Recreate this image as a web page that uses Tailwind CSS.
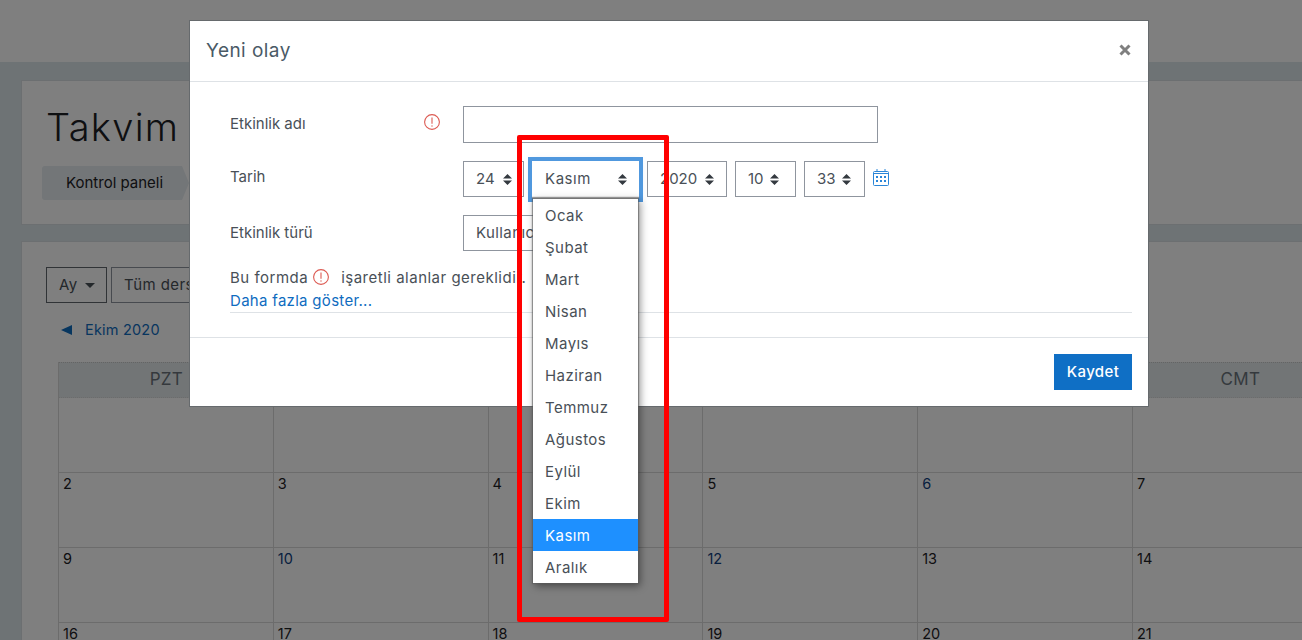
<!DOCTYPE html>
<html lang="tr">
<head>
  <meta charset="UTF-8">
  <meta name="viewport" content="width=device-width, initial-scale=1.0">
  <title>Takvim</title>
  <script src="https://cdn.jsdelivr.net/npm/@tailwindcss/browser@4"></script>
</head>
<body class="font-['Inter',sans-serif] text-[15px] text-[#1d2125]">
  <div class="relative w-[1302px] h-[640px] overflow-hidden bg-white">

    <!-- page behind the modal -->
    <div class="h-[62px] bg-white"></div>
    <div class="w-[1500px] h-[578px] bg-[#dde6eb] pt-[18px] pl-[21px]">
      <div class="h-[145px] bg-white border border-[#d9dee2] pl-[24px] pt-[18px]">
        <h1 class="text-[38px] font-light tracking-[1.3px] leading-[57px] text-[#1d2125]">Takvim</h1>
        <div class="mt-[10px] -ml-[4px] w-[147px] h-[34px] bg-[#e6ecf0] rounded-l-[3px] flex items-center pl-[24px] text-[15px] whitespace-nowrap [clip-path:polygon(0_0,140px_0,147px_50%,140px_100%,0_100%)]">Kontrol paneli</div>
      </div>
      <div class="mt-[16px] h-[420px] bg-white border border-[#d9dee2] pl-[24px] pt-[25px]">
        <div class="flex gap-[4px] text-[#495057]">
          <div class="w-[61px] h-[36px] border border-[#60676d] flex items-center gap-[7px] pl-[12px] tracking-[0.4px]">Ay
            <span class="w-0 h-0 border-x-[5px] border-x-transparent border-t-[5px] border-t-[#495057]"></span>
          </div>
          <div class="w-[200px] h-[36px] border border-[#8f959e] flex items-center pl-[12px] tracking-[0.4px]">Tüm dersler</div>
        </div>
        <div class="mt-[16px] ml-[15px] h-[22px] flex items-center gap-[13px] text-[#0f6cbf] text-[14.5px] tracking-[0.2px]">
          <span class="w-0 h-0 border-y-[5px] border-y-transparent border-r-[11px] border-r-[#0f6cbf]"></span>Ekim 2020
        </div>
        <div class="mt-[21px] ml-[12px] w-[1505px] grid grid-cols-[repeat(7,214.8px)] grid-rows-[36px_75px_75px_75px_75px] border-l border-[#d8d8d8] text-[14.5px]">
          <div class="bg-[#e4ebed] border-t border-dotted border-[#c8c8c8] border-b border-b-[#d8d8d8] text-center text-[#6a737b] text-[17px] leading-[32px] tracking-[0.3px]">PZT</div>
          <div class="bg-[#e4ebed] border-t border-dotted border-[#c8c8c8] border-b border-b-[#d8d8d8] text-center text-[#6a737b] text-[17px] leading-[32px] tracking-[0.3px]">SAL</div>
          <div class="bg-[#e4ebed] border-t border-dotted border-[#c8c8c8] border-b border-b-[#d8d8d8] text-center text-[#6a737b] text-[17px] leading-[32px] tracking-[0.3px]">ÇAR</div>
          <div class="bg-[#e4ebed] border-t border-dotted border-[#c8c8c8] border-b border-b-[#d8d8d8] text-center text-[#6a737b] text-[17px] leading-[32px] tracking-[0.3px]">PER</div>
          <div class="bg-[#e4ebed] border-t border-dotted border-[#c8c8c8] border-b border-b-[#d8d8d8] text-center text-[#6a737b] text-[17px] leading-[32px] tracking-[0.3px]">CUM</div>
          <div class="bg-[#e4ebed] border-t border-dotted border-[#c8c8c8] border-b border-b-[#d8d8d8] text-center text-[#6a737b] text-[17px] leading-[32px] tracking-[0.3px]">CMT</div>
          <div class="bg-[#e4ebed] border-t border-dotted border-[#c8c8c8] border-b border-b-[#d8d8d8] text-center text-[#6a737b] text-[17px] leading-[32px] tracking-[0.3px]">PAZ</div>

          <div class="border-r border-b border-[#d8d8d8]"></div>
          <div class="border-r border-b border-[#d8d8d8]"></div>
          <div class="border-r border-b border-[#d8d8d8]"></div>
          <div class="border-r border-b border-[#d8d8d8]"></div>
          <div class="border-r border-b border-[#d8d8d8]"></div>
          <div class="border-r border-b border-[#d8d8d8]"></div>
          <div class="border-r border-b border-[#d8d8d8]"></div>

          <div class="border-r border-b border-[#d8d8d8] pl-[4px]">2</div>
          <div class="border-r border-b border-[#d8d8d8] pl-[4px]">3</div>
          <div class="border-r border-b border-[#d8d8d8] pl-[4px]">4</div>
          <div class="border-r border-b border-[#d8d8d8] pl-[4px]">5</div>
          <div class="border-r border-b border-[#d8d8d8] pl-[4px] text-[#0f3f7f]">6</div>
          <div class="border-r border-b border-[#d8d8d8] pl-[4px]">7</div>
          <div class="border-r border-b border-[#d8d8d8] pl-[4px]">8</div>

          <div class="border-r border-b border-[#d8d8d8] pl-[4px]">9</div>
          <div class="border-r border-b border-[#d8d8d8] pl-[4px] text-[#0f3f7f]">10</div>
          <div class="border-r border-b border-[#d8d8d8] pl-[4px]">11</div>
          <div class="border-r border-b border-[#d8d8d8] pl-[4px] text-[#0f3f7f]">12</div>
          <div class="border-r border-b border-[#d8d8d8] pl-[4px]">13</div>
          <div class="border-r border-b border-[#d8d8d8] pl-[4px]">14</div>
          <div class="border-r border-b border-[#d8d8d8] pl-[4px]">15</div>

          <div class="border-r border-b border-[#d8d8d8] pl-[4px]">16</div>
          <div class="border-r border-b border-[#d8d8d8] pl-[4px]">17</div>
          <div class="border-r border-b border-[#d8d8d8] pl-[4px]">18</div>
          <div class="border-r border-b border-[#d8d8d8] pl-[4px]">19</div>
          <div class="border-r border-b border-[#d8d8d8] pl-[4px]">20</div>
          <div class="border-r border-b border-[#d8d8d8] pl-[4px]">21</div>
          <div class="border-r border-b border-[#d8d8d8] pl-[4px]">22</div>
        </div>
      </div>
    </div>

    <!-- backdrop -->
    <div class="absolute inset-0 bg-black/50"></div>

    <!-- modal -->
    <div class="absolute left-[189px] top-[20px] w-[960px] h-[387px] bg-white border border-[#666a6d]">
      <div class="h-[61px] border-b border-[#dee2e6] flex items-center justify-between pl-[16px] pr-[17px]">
        <h2 class="text-[19px] tracking-[0.45px] text-[#4a5a66]">Yeni olay</h2>
        <svg width="12" height="12" viewBox="0 0 12 12" class="mb-[2px]"><path d="M1.5 1.5L10.5 10.5M10.5 1.5L1.5 10.5" stroke="#7f7f7f" stroke-width="3"/></svg>
      </div>

      <div class="h-[255px] pl-[40px] pr-[16px] pt-[24px] text-[#495057]">
        <div class="flex items-center h-[37px]">
          <label class="w-[194px] whitespace-nowrap">Etkinlik adı</label>
          <svg width="16" height="16" viewBox="0 0 16 16" class="mb-[5px]"><circle cx="8" cy="8" r="7.4" fill="none" stroke="#dc5a52" stroke-width="1.1"/><path d="M8 3.4V9.8" stroke="#dc5a52" stroke-width="1.1"/><circle cx="8" cy="12" r="0.7" fill="#dc5a52"/></svg>
          <div class="ml-[23px] w-[415px] h-[37px] border border-[#8f959e]"></div>
        </div>

        <div class="flex items-center h-[36px] mt-[18px]">
          <label class="w-[233px] mb-[4px]">Tarih</label>
          <div class="flex items-center gap-[8px]">
            <div class="w-[61px] h-[36px] border border-[#8f959e] flex items-center justify-between pl-[12px] pr-[11px]">24
              <svg width="9" height="11" viewBox="0 0 9 11"><path d="M0 4.5L4.5 0L9 4.5ZM0 6.5H9L4.5 11Z" fill="#343a40"/></svg>
            </div>
            <div class="relative w-[107px] h-[37px] ring-[4px] ring-[#5098de] shadow-[0_0_6px_rgba(80,152,222,0.5)] flex items-center justify-between pl-[13px] pr-[12px] tracking-[0.55px]">Kasım
              <svg width="9" height="11" viewBox="0 0 9 11"><path d="M0 4.5L4.5 0L9 4.5ZM0 6.5H9L4.5 11Z" fill="#343a40"/></svg>
            </div>
            <div class="w-[80px] h-[36px] border border-[#8f959e] flex items-center justify-between pl-[12px] pr-[12px]">2020
              <svg width="9" height="11" viewBox="0 0 9 11"><path d="M0 4.5L4.5 0L9 4.5ZM0 6.5H9L4.5 11Z" fill="#343a40"/></svg>
            </div>
            <div class="w-[61px] h-[36px] border border-[#8f959e] flex items-center justify-between pl-[12px] pr-[16px]">10
              <svg width="9" height="11" viewBox="0 0 9 11"><path d="M0 4.5L4.5 0L9 4.5ZM0 6.5H9L4.5 11Z" fill="#343a40"/></svg>
            </div>
            <div class="w-[61px] h-[36px] border border-[#8f959e] flex items-center justify-between pl-[12px] pr-[13px]">33
              <svg width="9" height="11" viewBox="0 0 9 11"><path d="M0 4.5L4.5 0L9 4.5ZM0 6.5H9L4.5 11Z" fill="#343a40"/></svg>
            </div>
            <svg width="16" height="17" viewBox="0 0 16 17" class="mb-[3px]">
              <rect x="0.5" y="2.5" width="15" height="14" rx="1" fill="none" stroke="#2a86d8"/>
              <path d="M0 4.5H16" stroke="#2a86d8" stroke-width="1"/>
              <path d="M4 0V3M12 0V3" stroke="#2a86d8"/>
              <path d="M3 7h2v2H3zM7 7h2v2H7zM11 7h2v2h-2zM3 11h2v2H3zM7 11h2v2H7zM11 11h2v2h-2z" fill="#2a86d8"/>
            </svg>
          </div>
        </div>

        <div class="flex items-center h-[36px] mt-[18px]">
          <label class="w-[233px]">Etkinlik türü</label>
          <div class="w-[150px] h-[36px] border border-[#8f959e] flex items-center pl-[12px] tracking-[0.4px]">Kullanıcı</div>
        </div>

        <div class="flex items-center h-[23px] mt-[16px] whitespace-nowrap tracking-[0.5px]">
          Bu formda
          <svg width="16" height="16" viewBox="0 0 16 16" class="ml-[5px] mr-[12px] mb-[3px]"><circle cx="8" cy="8" r="7.4" fill="none" stroke="#dc5a52" stroke-width="1.1"/><path d="M8 3.4V9.8" stroke="#dc5a52" stroke-width="1.1"/><circle cx="8" cy="12" r="0.7" fill="#dc5a52"/></svg>
          işaretli alanlar gereklidir.
        </div>
        <div class="h-[23px] border-b border-[#dee2e6] text-[#0f6cbf] leading-[22px] tracking-[0.3px]">Daha fazla göster...</div>
      </div>

      <div class="border-t border-[#dee2e6] h-[69px] flex justify-end pt-[16px] pr-[16px]">
        <button class="w-[78px] h-[36px] bg-[#0f6fc5] text-white font-medium tracking-[0.4px]">Kaydet</button>
      </div>
    </div>

    <!-- open month list -->
    <div class="absolute left-[533px] top-[198px] w-[105px] bg-white border-t border-[#767676] text-[#495057] tracking-[0.45px] shadow-[0_0_1px_1px_rgba(90,90,90,0.6),2px_3px_8px_rgba(0,0,0,0.45)]">
      <div class="h-[32px] pl-[12px] pt-[2px] flex items-center">Ocak</div>
      <div class="h-[32px] pl-[12px] pt-[2px] flex items-center">Şubat</div>
      <div class="h-[32px] pl-[12px] pt-[2px] flex items-center">Mart</div>
      <div class="h-[32px] pl-[12px] pt-[2px] flex items-center">Nisan</div>
      <div class="h-[32px] pl-[12px] pt-[2px] flex items-center">Mayıs</div>
      <div class="h-[32px] pl-[12px] pt-[2px] flex items-center">Haziran</div>
      <div class="h-[32px] pl-[12px] pt-[2px] flex items-center">Temmuz</div>
      <div class="h-[32px] pl-[12px] pt-[2px] flex items-center">Ağustos</div>
      <div class="h-[32px] pl-[12px] pt-[2px] flex items-center">Eylül</div>
      <div class="h-[32px] pl-[12px] pt-[2px] flex items-center">Ekim</div>
      <div class="h-[32px] pl-[12px] pt-[2px] flex items-center bg-[#1e90ff] text-white">Kasım</div>
      <div class="h-[32px] pl-[12px] pt-[2px] flex items-center">Aralık</div>
    </div>

    <!-- red annotation drawn on the screenshot -->
    <div class="absolute left-[517px] top-[135px] w-[152px] h-[487px] border-[5px] border-[#ff0000] rounded-[2px]"></div>
  </div>
</body>
</html>
